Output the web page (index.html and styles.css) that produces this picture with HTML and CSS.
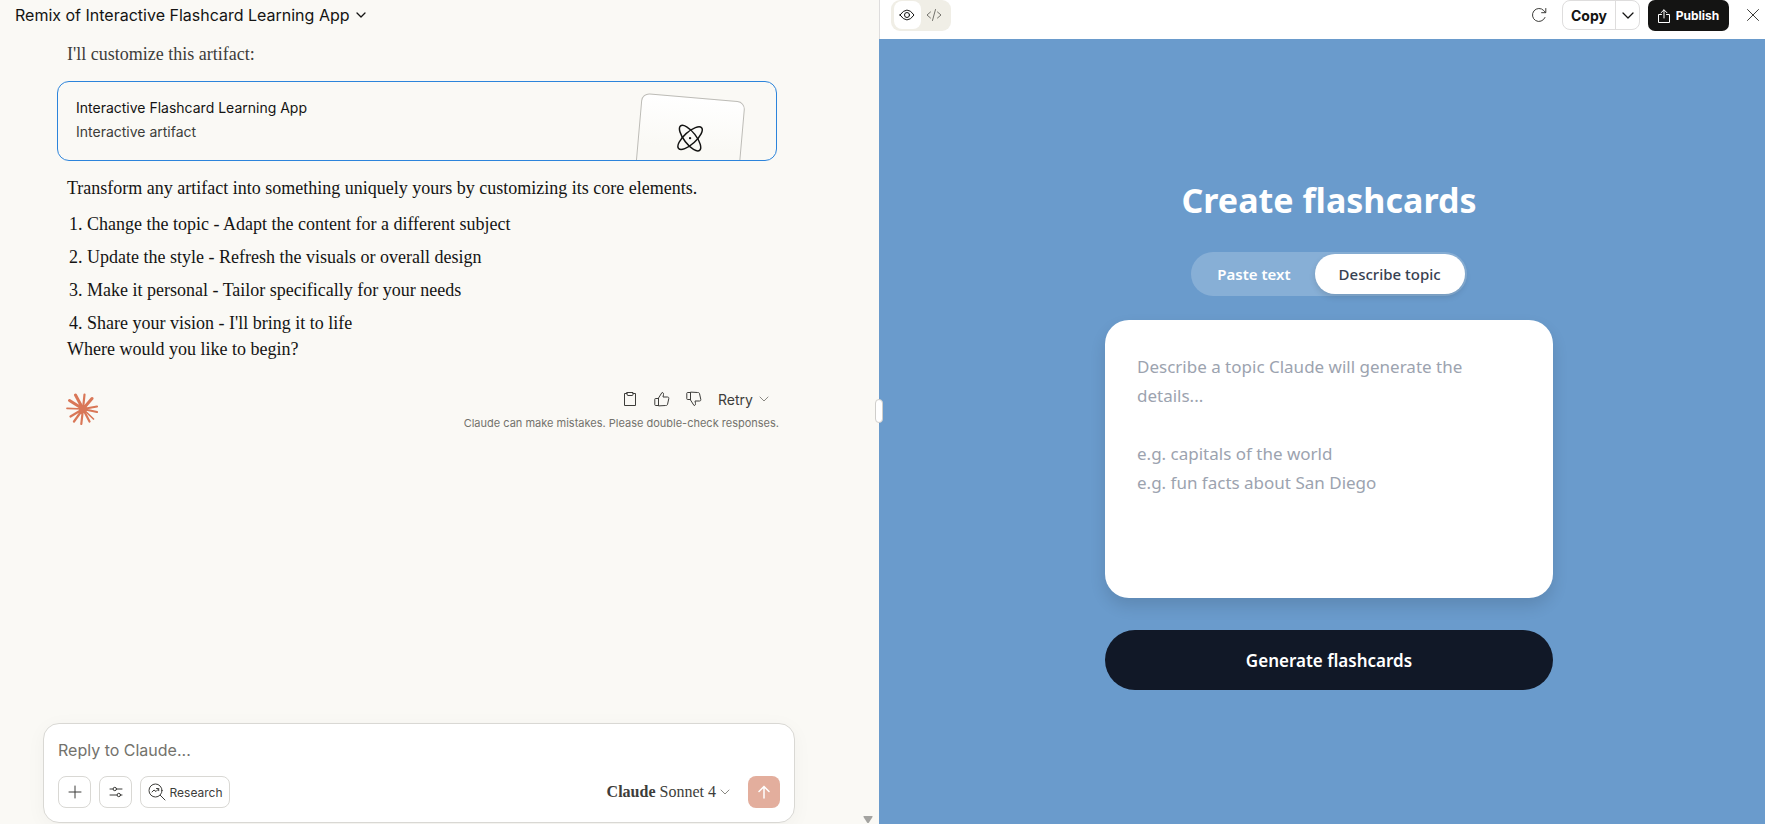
FILE: index.html
```html
<!DOCTYPE html>
<html lang="en">
<head>
<meta charset="utf-8">
<title>Remix of Interactive Flashcard Learning App</title>
<link rel="stylesheet" href="styles.css">
</head>
<body>
<div class="app">
  <main class="chat">
    <header class="chat-header">
      <button class="chat-title" type="button">Remix of Interactive Flashcard Learning App
        <svg class="chevron" width="10" height="6" viewBox="0 0 10 6"><path d="M1 1l4 4 4-4"/></svg>
      </button>
    </header>

    <div class="thread">
      <article class="message">
        <p class="lead">I'll customize this artifact:</p>
        <button class="artifact" type="button">
          <span class="artifact-text">
            <span class="artifact-name">Interactive Flashcard Learning App</span>
            <span class="artifact-kind">Interactive artifact</span>
          </span>
          <span class="artifact-sheet">
            <svg class="atom" width="28" height="28" viewBox="0 0 28 28"><ellipse cx="14" cy="14" rx="6" ry="15.500" transform="rotate(-43 14 14)"/><ellipse cx="14" cy="14" rx="6" ry="15.500" transform="rotate(43 14 14)"/><circle class="nucleus" cx="14" cy="14" r="1.200"/></svg>
          </span>
        </button>
        <p>Transform any artifact into something uniquely yours by customizing its core elements.</p>
        <ol class="steps">
          <li>Change the topic - Adapt the content for a different subject</li>
          <li>Update the style - Refresh the visuals or overall design</li>
          <li>Make it personal - Tailor specifically for your needs</li>
          <li>Share your vision - I'll bring it to life</li>
        </ol>
        <p>Where would you like to begin?</p>
      </article>

      <div class="message-footer">
        <svg class="spark" width="32" height="32" viewBox="0 0 32 32">
          <path stroke-width="3" d="M17 16L9.500 2M17 16L3.500 7.500M17 16L26 5.500"/>
          <path stroke-width="2.200" d="M17 16L18.500 1.500M17 16L31 13.500M17 16L31 19M17 16L23.500 28.500M17 16L15.300 31M17 16L8 28.500M17 16L4.500 23.500"/>
          <path stroke-width="1.700" d="M17 16L1 15.300M17 16L27.500 26"/>
          <circle cx="17" cy="16" r="4"/>
        </svg>
        <div class="feedback">
          <div class="actions">
            <button class="action" type="button" aria-label="Copy"><svg width="14" height="16" viewBox="0 0 14 16"><path d="M4 2.500H1.500v12h11v-12H10M4 1.500h6v2a1 1 0 0 1-1 1H5a1 1 0 0 1-1-1z"/></svg></button>
            <button class="action" type="button" aria-label="Good response"><svg width="16" height="16" viewBox="0 0 16 16"><path d="M4.500 14.500V7L8 1.500c1.300 0 1.700 1 1.500 2L9 6h4.500c1 0 1.500.700 1.300 1.500l-1.300 6c-.200.700-.700 1-1.500 1zM4.500 7.500h-3a.700.700 0 0 0-.700.700v5.600c0 .400.300.700.700.700h3"/></svg></button>
            <button class="action" type="button" aria-label="Bad response"><svg width="16" height="16" viewBox="0 0 16 16"><path d="M4.500 1.500V9L8 14.500c1.300 0 1.700-1 1.500-2L9 10h4.500c1 0 1.500-.700 1.300-1.500l-1.300-6c-.200-.700-.700-1-1.500-1zM4.500 8.500h-3a.700.700 0 0 1-.700-.700V2.200c0-.400.300-.700.700-.700h3"/></svg></button>
            <button class="retry" type="button">Retry <svg class="chevron thin" width="10" height="6" viewBox="0 0 10 6"><path d="M1 1l4 4 4-4"/></svg></button>
          </div>
          <a class="disclaimer" href="#">Claude can make mistakes. Please double-check responses.</a>
        </div>
      </div>
    </div>

    <form class="composer">
      <input class="reply" type="text" placeholder="Reply to Claude..." aria-label="Reply to Claude">
      <div class="tools">
        <button class="tool" type="button" aria-label="Add content"><svg width="16" height="16" viewBox="0 0 16 16"><path d="M8 2v12M2 8h12"/></svg></button>
        <button class="tool" type="button" aria-label="Settings"><svg width="16" height="16" viewBox="0 0 16 16"><path d="M2 5h3M8.500 5H14M2 11h7M12.500 11H14"/><circle cx="6.800" cy="5" r="1.700"/><circle cx="10.800" cy="11" r="1.700"/></svg></button>
        <button class="tool research" type="button"><svg width="18" height="18" viewBox="0 0 18 18"><circle cx="7.500" cy="7.500" r="6.500"/><path d="M12.300 12.300L17 17M4 9l2-2 2 1.500L10.500 6M8.500 5.500h2.200v2.200"/></svg>Research</button>
        <button class="model" type="button"><strong>Claude</strong> Sonnet 4 <svg class="chevron thin" width="10" height="6" viewBox="0 0 10 6"><path d="M1 1l4 4 4-4"/></svg></button>
        <button class="send" type="submit" aria-label="Send"><svg width="16" height="16" viewBox="0 0 16 16"><path d="M8 14V2.500M3 7.500l5-5 5 5"/></svg></button>
      </div>
    </form>
    <svg class="scroll-arrow" width="10" height="7" viewBox="0 0 10 7"><path d="M1 0h8q1 0 .5 1L6 6.500q-1 1-2 0L.500 1Q0 0 1 0z"/></svg>
  </main>

  <section class="preview">
    <span class="resizer"></span>
    <header class="bar">
      <div class="view-toggle">
        <button class="view active" type="button" aria-label="Preview"><svg width="16" height="12" viewBox="0 0 16 12"><path d="M1 6q7-10 14 0-7 10-14 0z"/><circle cx="8" cy="6" r="2.500"/></svg></button>
        <button class="view" type="button" aria-label="Code"><svg width="16" height="12" viewBox="0 0 16 12"><path d="M4.500 3L1 6l3.500 3M11.500 3L15 6l-3.500 3M9.500.500l-3 11"/></svg></button>
      </div>
      <div class="bar-actions">
        <button class="plain" type="button" aria-label="Reload"><svg width="16" height="16" viewBox="0 0 16 16"><path d="M14 10.500A6.500 6.500 0 1 1 12.800 3.600L14.500 5.500M14.800 1.500v4.200h-4.200"/></svg></button>
        <div class="copy-group">
          <button class="copy" type="button">Copy</button>
          <button class="copy-more" type="button" aria-label="More copy options"><svg class="chevron" width="12" height="7" viewBox="0 0 12 7"><path d="M1 1l5 5 5-5"/></svg></button>
        </div>
        <button class="publish" type="button"><svg width="12" height="14" viewBox="0 0 12 14"><path d="M3.500 5.500h-3v8h11v-8h-3M6 9V1M3 3.800L6 .800l3 3"/></svg>Publish</button>
        <button class="plain close" type="button" aria-label="Close"><svg width="12" height="12" viewBox="0 0 12 12"><path d="M.500.500l11 11M11.500.500l-11 11"/></svg></button>
      </div>
    </header>
    <div class="stage">
      <form class="creator">
        <h1>Create flashcards</h1>
        <div class="mode">
          <button type="button">Paste text</button>
          <button class="selected" type="button">Describe topic</button>
        </div>
        <textarea class="topic" aria-label="Topic" placeholder="Describe a topic Claude will generate the details...&#10;&#10;e.g. capitals of the world&#10;e.g. fun facts about San Diego"></textarea>
        <button class="generate" type="button">Generate flashcards</button>
      </form>
    </div>
  </section>
</div>
</body>
</html>
```
FILE: styles.css
```css
* { box-sizing: border-box; }
body { margin: 0; color: #141413; font-family: Inter, "Liberation Sans", sans-serif; }
button, input, textarea { margin: 0; padding: 0; border: 0; background: none; color: inherit; font: inherit; }
button { cursor: pointer; }
svg { flex: none; fill: none; stroke: currentColor; stroke-linecap: round; stroke-linejoin: round; }
p { margin: 0; }

.app { display: flex; height: 100vh; overflow: hidden; }
.chat { position: relative; flex: none; width: 49.8%; display: flex; flex-direction: column; padding: 0 84px 1px 43px; background: #faf9f5; }
.preview { position: relative; flex: 1; min-width: 0; display: flex; flex-direction: column; }

.chat-header { margin-left: -28px; height: 32px; }
.chat-title { display: flex; align-items: center; gap: 6px; height: 30px; font-size: 16px; white-space: nowrap; }
.chevron { stroke-width: 1.300; }
.thin { color: #8a8983; stroke-width: 1; }

.thread { flex: 1; padding: 9px 18px 0 14px; }
.message { font-family: "Liberation Serif", serif; font-size: 18px; line-height: 26px; }
.message p { padding-left: 10px; }
.message .lead { color: #3d3d3a; }
.artifact { display: flex; justify-content: space-between; width: 100%; height: 80px; margin: 14px 0; padding: 0 36px 0 18px; overflow: hidden; border: 1px solid #2c84db; border-radius: 12px; font-family: Inter, sans-serif; font-size: 14px; line-height: 24px; text-align: left; }
.artifact-text { display: flex; flex-direction: column; padding-top: 14px; }
.artifact-kind { color: #3d3d3a; }
.artifact-sheet { display: flex; justify-content: center; width: 104px; height: 130px; margin-top: 15px; padding-top: 26px; border: 1px solid #bdbcb7; border-radius: 8px; background: linear-gradient(#fff, #faf9f5 50px); transform: rotate(5deg); }
.atom { stroke-width: 1.500; }
.nucleus { fill: currentColor; stroke: none; }
.steps { display: flex; flex-direction: column; gap: 7px; margin: 10px 0 0; padding-left: 30px; }

.message-footer { display: flex; justify-content: space-between; align-items: flex-start; padding: 21px 0 0 9px; margin-right: -2px; }
.spark { margin-top: 10px; color: #d97757; }
.spark circle { fill: currentColor; stroke: none; }
.feedback { display: flex; flex-direction: column; align-items: flex-end; }
.actions { display: flex; align-items: center; height: 32px; padding-right: 10px; color: #3d3d3a; }
.action { display: grid; place-items: center; width: 32px; height: 32px; }
.retry { display: flex; align-items: center; gap: 6px; padding-left: 8px; font-size: 14px; }
.disclaimer { color: #73726c; font-size: 11px; line-height: 16px; text-decoration: none; }

.composer { padding: 14px; border: 1px solid #d9d8d4; border-radius: 16px; background: #fff; box-shadow: 0 4px 20px rgba(0, 0, 0, 0.04); }
.reply { display: block; width: 100%; height: 24px; outline: 0; font-size: 16px; }
.reply::placeholder { color: #73726c; opacity: 1; }
.tools { display: flex; align-items: center; gap: 8px; margin-top: 14px; color: #3d3d3a; }
.tool { display: flex; align-items: center; justify-content: center; gap: 4px; width: 33px; height: 32px; border: 1px solid #d9d8d4; border-radius: 8px; font-size: 12px; }
.research { width: 90px; }
.model { display: flex; align-items: center; gap: 4px; margin-left: auto; padding-right: 10px; font-family: "Liberation Serif", serif; font-size: 16px; }
.send { display: grid; place-items: center; width: 32px; height: 32px; border-radius: 8px; background: #e3ae9d; color: #fff; }
.send svg { stroke-width: 1.500; }
.scroll-arrow { position: absolute; right: 6px; bottom: 1px; fill: #a3a3a0; stroke: none; }

.resizer { position: absolute; z-index: 1; top: 399px; left: -4px; width: 8px; height: 24px; border: 1px solid #cfcecb; border-radius: 4px; background: #fff; }
.bar { display: flex; justify-content: space-between; height: 39px; padding: 0 6px 0 11px; border-left: 1px solid #dedddd; background: #fff; }
.view-toggle { display: flex; height: 31px; padding: 1px 3px 2px; border-radius: 9px; background: #f0eee6; }
.view { display: grid; place-items: center; width: 27px; height: 28px; border-radius: 8px; color: #73726c; }
.view.active { background: #fff; color: #141413; }
.bar-actions { display: flex; align-items: flex-start; gap: 8px; font-size: 14px; font-weight: 700; }
.plain { display: grid; place-items: center; width: 31px; height: 30px; color: #3d3d3a; }
.close { width: 12px; margin-left: 10px; }
.copy-group { display: flex; height: 30px; border: 1px solid #dedddd; border-radius: 8px; }
.copy { width: 52px; }
.copy-more { display: grid; place-items: center; width: 24px; border-left: 1px solid #dedddd; }
.publish { display: flex; align-items: center; justify-content: center; gap: 6px; width: 81px; height: 31px; border-radius: 7px; background: #141413; color: #fff; font-size: 12px; }

.stage { flex: 1; display: flex; align-items: center; justify-content: center; padding-left: 14px; background: #6a9bcc; font-family: "Noto Sans", sans-serif; }
.creator { display: flex; flex-direction: column; align-items: center; width: 448px; }
.creator h1 { margin: 0 0 24px; color: #fff; font-size: 34px; line-height: 55px; }
.mode { display: flex; margin-bottom: 24px; padding: 2px; border-radius: 22px; background: rgba(255, 255, 255, 0.2); font-size: 15px; }
.mode button { height: 40px; padding: 0 24px; border-radius: 20px; color: #fff; font-weight: 600; }
.mode .selected { background: #fff; color: #374151; font-weight: 500; box-shadow: 0 3px 6px rgba(0, 0, 0, 0.12); }
.topic { width: 100%; height: 278px; margin-bottom: 32px; padding: 32px; border-radius: 24px; outline: 0; resize: none; background: #fff; font-size: 17px; line-height: 29px; box-shadow: 0 8px 16px rgba(0, 0, 0, 0.12); }
.topic::placeholder { color: #9ca3af; opacity: 1; }
.generate { width: 100%; height: 60px; border-radius: 30px; background: #111827; color: #fff; font-size: 17px; font-weight: 600; }
```
